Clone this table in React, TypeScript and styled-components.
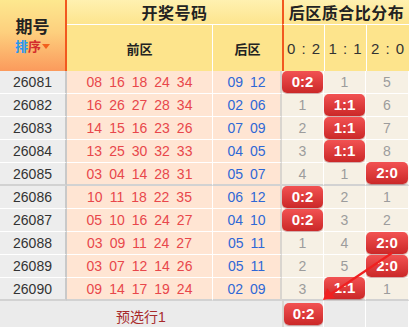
import styled, { createGlobalStyle } from "styled-components";

interface Draw {
  issue: string;
  front: string[];
  back: string[];
  stats: (number | string | null)[];
}

const draws: Draw[] = [
  { issue: "26081", front: ["08", "16", "18", "24", "34"], back: ["09", "12"], stats: ["0:2", 1, 5] },
  { issue: "26082", front: ["16", "26", "27", "28", "34"], back: ["02", "06"], stats: [1, "1:1", 6] },
  { issue: "26083", front: ["14", "15", "16", "23", "26"], back: ["07", "09"], stats: [2, "1:1", 7] },
  { issue: "26084", front: ["13", "25", "30", "32", "33"], back: ["04", "05"], stats: [3, "1:1", 8] },
  { issue: "26085", front: ["03", "04", "14", "28", "31"], back: ["05", "07"], stats: [4, 1, "2:0"] },
  { issue: "26086", front: ["10", "11", "18", "22", "35"], back: ["06", "12"], stats: ["0:2", 2, 1] },
  { issue: "26087", front: ["05", "10", "16", "24", "27"], back: ["04", "10"], stats: ["0:2", 3, 2] },
  { issue: "26088", front: ["03", "09", "11", "24", "27"], back: ["05", "11"], stats: [1, 4, "2:0"] },
  { issue: "26089", front: ["03", "07", "12", "14", "26"], back: ["05", "11"], stats: [2, 5, "2:0"] },
  { issue: "26090", front: ["09", "14", "17", "19", "24"], back: ["02", "09"], stats: [3, "1:1", 1] },
];

const ratios = ["0 : 2", "1 : 1", "2 : 0"];

const GlobalStyle = createGlobalStyle`
  * { box-sizing: border-box; }
  body {
    margin: 0;
    background: #ffffff;
    font-family: "Liberation Sans", Arial, "Noto Sans CJK SC", sans-serif;
  }
`;

const App = () => {
  return (
    <>
      <GlobalStyle />
      <Wrap>
        <StyledTable>
          <colgroup>
            <col style={{ width: 67 }} />
            <col style={{ width: 146 }} />
            <col style={{ width: 69 }} />
            <col style={{ width: 42 }} />
            <col style={{ width: 42 }} />
            <col style={{ width: 43 }} />
          </colgroup>
          <thead>
            <tr>
              <IssueHead rowSpan={2}>
                <IssueTitle>期号</IssueTitle>
                <SortLink>
                  <Blue>排</Blue>
                  <Red>序</Red>
                  <Caret />
                </SortLink>
              </IssueHead>
              <GroupHead colSpan={2}>开奖号码</GroupHead>
              <GroupHead colSpan={3} $split>
                后区质合比分布
              </GroupHead>
            </tr>
            <tr>
              <SubHead>前区</SubHead>
              <SubHead $edge>后区</SubHead>
              {ratios.map((r) => (
                <RatioHead key={r}>{r}</RatioHead>
              ))}
            </tr>
          </thead>
          <tbody>
            {draws.map((d, index: number) => {
              const groupEnd = index % 5 === 4;
              return (
                <tr key={d.issue}>
                  <IssueCell $groupEnd={groupEnd}>{d.issue}</IssueCell>
                  <FrontCell $groupEnd={groupEnd}>
                    <Balls>
                      {d.front.map((n, i) => (
                        <span key={i}>{n}</span>
                      ))}
                    </Balls>
                  </FrontCell>
                  <BackCell $groupEnd={groupEnd}>
                    <Balls>
                      {d.back.map((n, i) => (
                        <span key={i}>{n}</span>
                      ))}
                    </Balls>
                  </BackCell>
                  {d.stats.map((s, i) => (
                    <StatCell key={i} $groupEnd={groupEnd}>
                      {typeof s === "string" ? <Badge>{s}</Badge> : s}
                    </StatCell>
                  ))}
                </tr>
              );
            })}
            <tr>
              <FootCell colSpan={3}>预选行1</FootCell>
              <FootStat>
                <Badge>0:2</Badge>
              </FootStat>
              <FootStat />
              <FootStat />
            </tr>
          </tbody>
        </StyledTable>
        <Arrow width="411" height="327" viewBox="0 0 411 327">
          <line x1="392" y1="253" x2="331" y2="294" stroke="#f02020" strokeWidth="2.2" />
          <polygon points="323,300 327,288 335,298" fill="#f02020" />
        </Arrow>
      </Wrap>
    </>
  );
};

export default App;

const Wrap = styled.div`
  position: relative;
  width: 411px;
  height: 327px;
  overflow: hidden;
`;

const StyledTable = styled.table`
  width: 409px;
  border-collapse: separate;
  border-spacing: 0;
  table-layout: fixed;

  & td,
  & th {
    padding: 0;
    text-align: center;
    vertical-align: middle;
  }
`;

const IssueHead = styled.th`
  height: 68px;
  background: linear-gradient(#fde88f 0%, #fdd07e 45%, #fb9a5c 100%);
  border-right: 2px solid #f2581f;
  color: #222;
  font-weight: bold;
`;

const IssueTitle = styled.div`
  font-size: 17px;
  line-height: 20px;
  padding-top: 2px;
`;

const SortLink = styled.div`
  font-size: 13px;
  line-height: 18px;
  display: flex;
  justify-content: center;
  align-items: center;
`;

const Blue = styled.span`
  color: #2496f2;
`;

const Red = styled.span`
  color: #d42c2c;
`;

const Caret = styled.span`
  display: inline-block;
  margin-left: 1px;
  border-left: 4px solid transparent;
  border-right: 4px solid transparent;
  border-top: 5px solid #f2601e;
`;

const GroupHead = styled.th<{ $split?: boolean }>`
  height: 22px;
  background: linear-gradient(#fff1b0, #fde58e);
  border-bottom: 1px solid #ffffff;
  border-left: ${(p) => (p.$split ? "2px solid #f2581f" : "none")};
  color: #222;
  font-size: 16px;
  font-weight: bold;
  letter-spacing: 0.5px;
`;

const SubHead = styled.th<{ $edge?: boolean }>`
  height: 46px;
  background: #fde48c;
  border-right: ${(p) => (p.$edge ? "none" : "1px solid #ffffff")};
  color: #222;
  font-size: 13px;
  font-weight: bold;
`;

const RatioHead = styled.th`
  background: #fde48c;
  border-left: 1px solid #ffffff;
  color: #333;
  font-size: 15px;
  font-weight: normal;
  letter-spacing: 1px;
  white-space: pre;

  &:nth-child(3) {
    border-left: 2px solid #f2581f;
  }
`;

const BodyCell = styled.td<{ $groupEnd?: boolean }>`
  height: 23px;
  font-size: 14px;
  border-bottom: ${(p) => (p.$groupEnd ? "2px solid #d2d2d2" : "1px solid #ffffff")};
`;

const IssueCell = styled(BodyCell)`
  background: #ededed;
  color: #333;
  border-right: 2px solid #c9c9c9;
`;

const FrontCell = styled(BodyCell)`
  background: #ffe5d3;
  color: #e8474b;
  border-right: 1px solid #ffffff;
`;

const BackCell = styled(BodyCell)`
  background: #ffe5d3;
  color: #2f68d6;
  border-right: 2px solid #d9d5cf;
`;

const StatCell = styled(BodyCell)`
  background: #f6f0e4;
  color: #9c9c9c;
  border-right: 1px solid #ffffff;
`;

const Balls = styled.div`
  display: flex;
  justify-content: center;
  gap: 7px;
`;

const Badge = styled.div`
  height: 22px;
  margin-top: -1px;
  border-radius: 5px;
  background: linear-gradient(#f25252, #cb2828);
  box-shadow: 0 1px 1px rgba(120, 0, 0, 0.35);
  color: #ffffff;
  font-size: 15px;
  font-weight: bold;
  line-height: 22px;
`;

const FootCell = styled.td`
  height: 27px;
  background: #ebebeb;
  color: #a82a2a;
  font-size: 14px;
  padding-top: 2px !important;
`;

const FootStat = styled.td`
  background: #ebebeb;
  border-right: 1px solid #ffffff;

  &:nth-child(2) {
    border-left: 2px solid #d9d5cf;
  }
`;

const Arrow = styled.svg`
  position: absolute;
  left: 0;
  top: 0;
  pointer-events: none;
`;
